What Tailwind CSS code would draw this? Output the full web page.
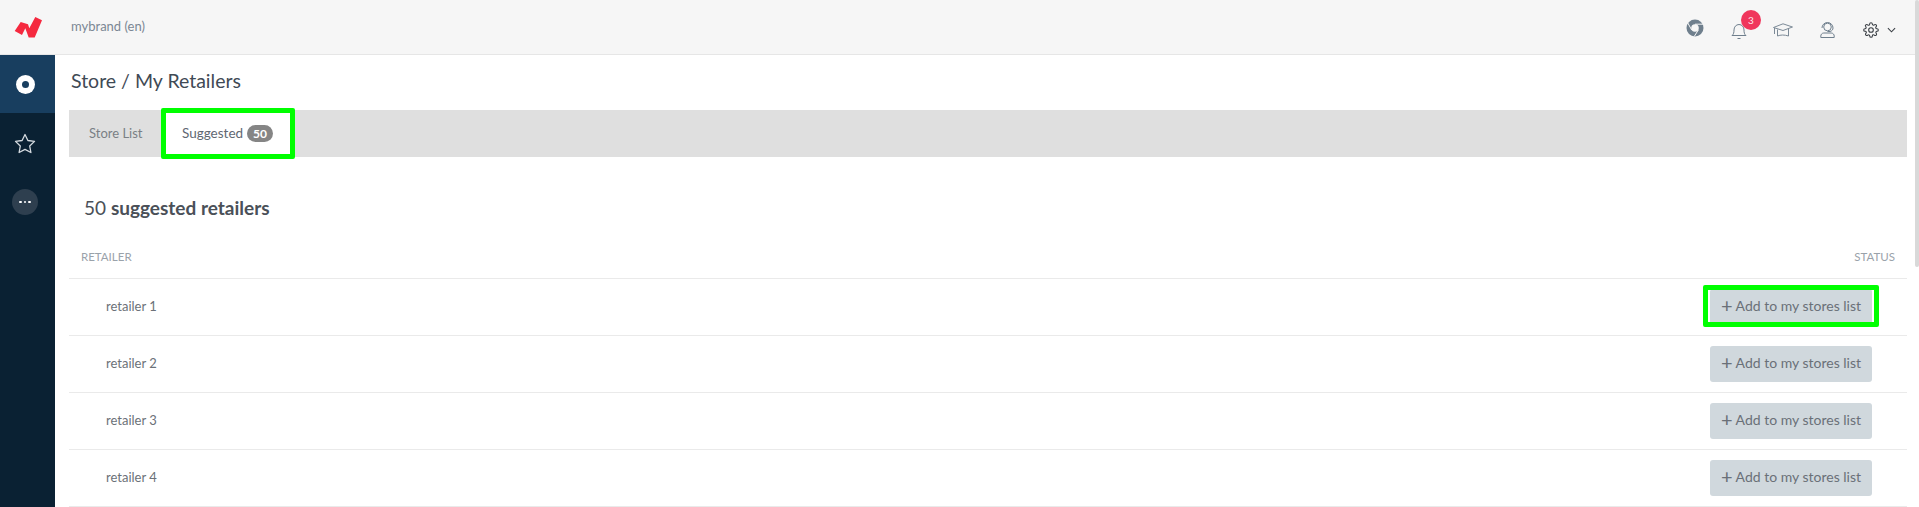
<!doctype html>
<html><head><meta charset="utf-8"><script src="https://cdn.jsdelivr.net/npm/@tailwindcss/browser@4"></script></head>
<body class="overflow-hidden bg-white font-['Lato','Open_Sans',sans-serif] text-[#545d69]">
<div class="relative flex h-[507px] w-[1919px] flex-col overflow-hidden">
  <header class="flex h-[55px] shrink-0 items-center border-b border-[#e6e6e6] bg-[#f6f6f6]">
    <div class="flex w-[55px] pl-[14px]">
      <svg width="28" height="21" viewBox="0 0 28 21"><path fill="#f5293f" d="M0.700 14 L6.700 5 L14 7.300 L15.300 11.300 L21.300 0 L28 3.300 L20.700 20.500 L14.700 20.500 L11.300 11.300 L8 18Z"/></svg>
    </div>
    <span class="ml-[16px] text-[13px] text-[#7b8794]">mybrand (en)</span>
    <div class="relative ml-auto mr-[14px] flex h-full items-center">
      <svg class="absolute left-[-219px] top-[19px]" width="18" height="18" viewBox="0 0 18 18"><circle cx="9" cy="9" r="8.500" fill="#6f7f8d"/><circle cx="9" cy="9" r="3.800" fill="#f6f6f6"/><path d="M9 5.200H17.500M5.700 11 1.800 4M12.300 11 8.200 17.500" stroke="#f6f6f6" stroke-width="1" fill="none"/></svg>
      <svg class="absolute left-[-174px] top-[22px]" width="16" height="18" viewBox="0 0 16 18" fill="none" stroke="#6f7f8d" stroke-width="1"><path d="M1 13.500c1.600-1.200 2-3 2-5.500C3 5 5 2.500 8 2.500S13 5 13 8c0 2.500.4 4.300 2 5.500ZM6.500 16.500h3"/></svg>
      <span class="absolute left-[-164px] top-[10px] flex h-[20px] w-[20px] items-center justify-center rounded-full bg-[#f0365c] text-[10px] text-[#fde8ec]">3</span>
      <svg class="absolute left-[-132px] top-[23px]" width="20" height="14" viewBox="0 0 20 14" fill="none" stroke="#7c8a97" stroke-width="1"><path d="M.5 4.500 10 .8l9.500 3.200L10 7.500ZM4.500 6.500v6.500c3-1.300 7-1.300 11 0V6"/><path d="M1.500 5v6"/></svg>
      <svg class="absolute left-[-85px] top-[21px]" width="15" height="17" viewBox="0 0 15 17" fill="none" stroke="#6f7f8d" stroke-width="1"><circle cx="7.500" cy="6" r="3.800"/><path d="M2 7a5.500 5.500 0 1 1 11 0c0 1.500-1 3-3 3.500H7.500M.8 16.500v-1.500c0-1.500 1.200-3 3-3h7.400c1.800 0 3 1.500 3 3v1.500Z"/></svg>
      <svg class="absolute left-[-42px] top-[22px]" width="16" height="16" viewBox="0 0 24 24" fill="none" stroke="#3a3f45" stroke-width="1.600"><circle cx="12" cy="12" r="3.500"/><path d="M19.400 15a1.650 1.650 0 0 0 .33 1.820l.06.06a2 2 0 1 1-2.830 2.830l-.06-.06a1.650 1.650 0 0 0-2.820 1.170V21a2 2 0 1 1-4 0v-.09a1.650 1.650 0 0 0-2.820-1.170l-.06.06a2 2 0 1 1-2.830-2.830l.06-.06A1.650 1.650 0 0 0 3.100 14H3a2 2 0 1 1 0-4h.09a1.650 1.650 0 0 0 1.170-2.820l-.06-.06a2 2 0 1 1 2.830-2.830l.06.06A1.650 1.650 0 0 0 10 3.090V3a2 2 0 1 1 4 0v.09a1.650 1.650 0 0 0 2.820 1.170l.06-.06a2 2 0 1 1 2.830 2.830l-.06.06A1.650 1.650 0 0 0 20.900 10H21a2 2 0 1 1 0 4h-.09a1.650 1.650 0 0 0-1.510 1Z"/></svg>
      <svg class="absolute left-[-18px] top-[27px]" width="9" height="6" viewBox="0 0 10 6" fill="none" stroke="#3a3f45" stroke-width="1.200"><path d="M1 1l4 4 4-4"/></svg>
    </div>
  </header>
  <div class="flex min-h-0 flex-1">
    <nav class="flex w-[55px] shrink-0 flex-col items-center bg-[#0a2133] pr-[5px]">
      <div class="mr-[-5px] flex h-[58px] w-[55px] items-center justify-center bg-[#183e5f] pr-[5px]"><span class="flex h-[19px] w-[19px] items-center justify-center rounded-full bg-white"><span class="h-[7px] w-[7px] rounded-full bg-[#183e5f]"></span></span></div>
      <svg class="mt-[20px]" width="22" height="21" viewBox="0 0 22 21" fill="none" stroke="#d5dbe0" stroke-width="1.300"><path d="M11 1.500l2.900 6 6.600.9-4.800 4.600 1.200 6.500L11 16.400l-5.900 3.100 1.200-6.500L1.500 8.400l6.600-.9Z" stroke-linejoin="round"/></svg>
      <div class="mt-[35px] flex h-[26px] w-[26px] items-center justify-center gap-[2px] rounded-full bg-[#2e3f4f]"><i class="h-[2.500px] w-[2.500px] rounded-full bg-white"></i><i class="h-[2.500px] w-[2.500px] rounded-full bg-white"></i><i class="h-[2.500px] w-[2.500px] rounded-full bg-white"></i></div>
    </nav>
    <main class="flex min-w-0 flex-1 flex-col pl-[14px] pr-[12px]">
      <h1 class="ml-[2px] mt-[14px] h-[41px] text-[19.500px] leading-[24px] font-normal text-[#3f4a55]">Store / My Retailers</h1>
      <div class="flex h-[47px] shrink-0 bg-[#dfdfdf] text-[13px]">
        <span class="flex w-[94px] items-center pl-[20px] text-[#7a7f85]">Store List</span>
        <span class="relative flex w-[130px] items-center bg-white pl-[19px] text-[13.500px] text-[#5f6872]">Suggested<b class="ml-[4px] rounded-full bg-[#858585] px-[6px] text-[12px] leading-[17px] text-white">50</b><span class="absolute inset-[-2px] rounded-[2px] border-[5px] border-[#00ff00]"></span></span>
      </div>
      <h2 class="ml-[15px] mt-[39px] h-[43px] text-[19px] leading-[24px] font-normal text-[#4a5058]">50 <b class="font-bold">suggested retailers</b></h2>
      <div class="flex h-[40px] items-center justify-between border-b border-[#eaeaea] px-[12px] pb-[3px] text-[11.500px] uppercase text-[#9aa2aa]"><span>Retailer</span><span>Status</span></div>
      <div class="relative flex h-[57px] shrink-0 items-center justify-between border-b border-[#eaeaea] pl-[37px] pr-[35px] text-[13px]"><span class="text-[#6b7178]">retailer 1</span><button class="flex h-[36px] w-[162px] items-center justify-center rounded-[3px] bg-[#d0d8dd] pb-[4px] text-[14px] text-[#6a7078]"><span class="mr-[3px] text-[20px] leading-none font-normal">+</span>Add to my stores list</button><span class="absolute right-[28px] top-[6px] h-[42px] w-[176px] rounded-[2px] border-[5px] border-[#00ff00]"></span></div>
      <div class="flex h-[57px] shrink-0 items-center justify-between border-b border-[#eaeaea] pl-[37px] pr-[35px] text-[13px]"><span class="text-[#6b7178]">retailer 2</span><button class="flex h-[36px] w-[162px] items-center justify-center rounded-[3px] bg-[#d0d8dd] pb-[4px] text-[14px] text-[#6a7078]"><span class="mr-[3px] text-[20px] leading-none font-normal">+</span>Add to my stores list</button></div>
      <div class="flex h-[57px] shrink-0 items-center justify-between border-b border-[#eaeaea] pl-[37px] pr-[35px] text-[13px]"><span class="text-[#6b7178]">retailer 3</span><button class="flex h-[36px] w-[162px] items-center justify-center rounded-[3px] bg-[#d0d8dd] pb-[4px] text-[14px] text-[#6a7078]"><span class="mr-[3px] text-[20px] leading-none font-normal">+</span>Add to my stores list</button></div>
      <div class="flex h-[57px] shrink-0 items-center justify-between border-b border-[#eaeaea] pl-[37px] pr-[35px] text-[13px]"><span class="text-[#6b7178]">retailer 4</span><button class="flex h-[36px] w-[162px] items-center justify-center rounded-[3px] bg-[#d0d8dd] pb-[4px] text-[14px] text-[#6a7078]"><span class="mr-[3px] text-[20px] leading-none font-normal">+</span>Add to my stores list</button></div>
    </main>
  </div>
  <div class="absolute right-0 top-0 h-[267px] w-[4px] rounded-[2px] bg-[#d9d9d9]"></div>
</div>
</body></html>
